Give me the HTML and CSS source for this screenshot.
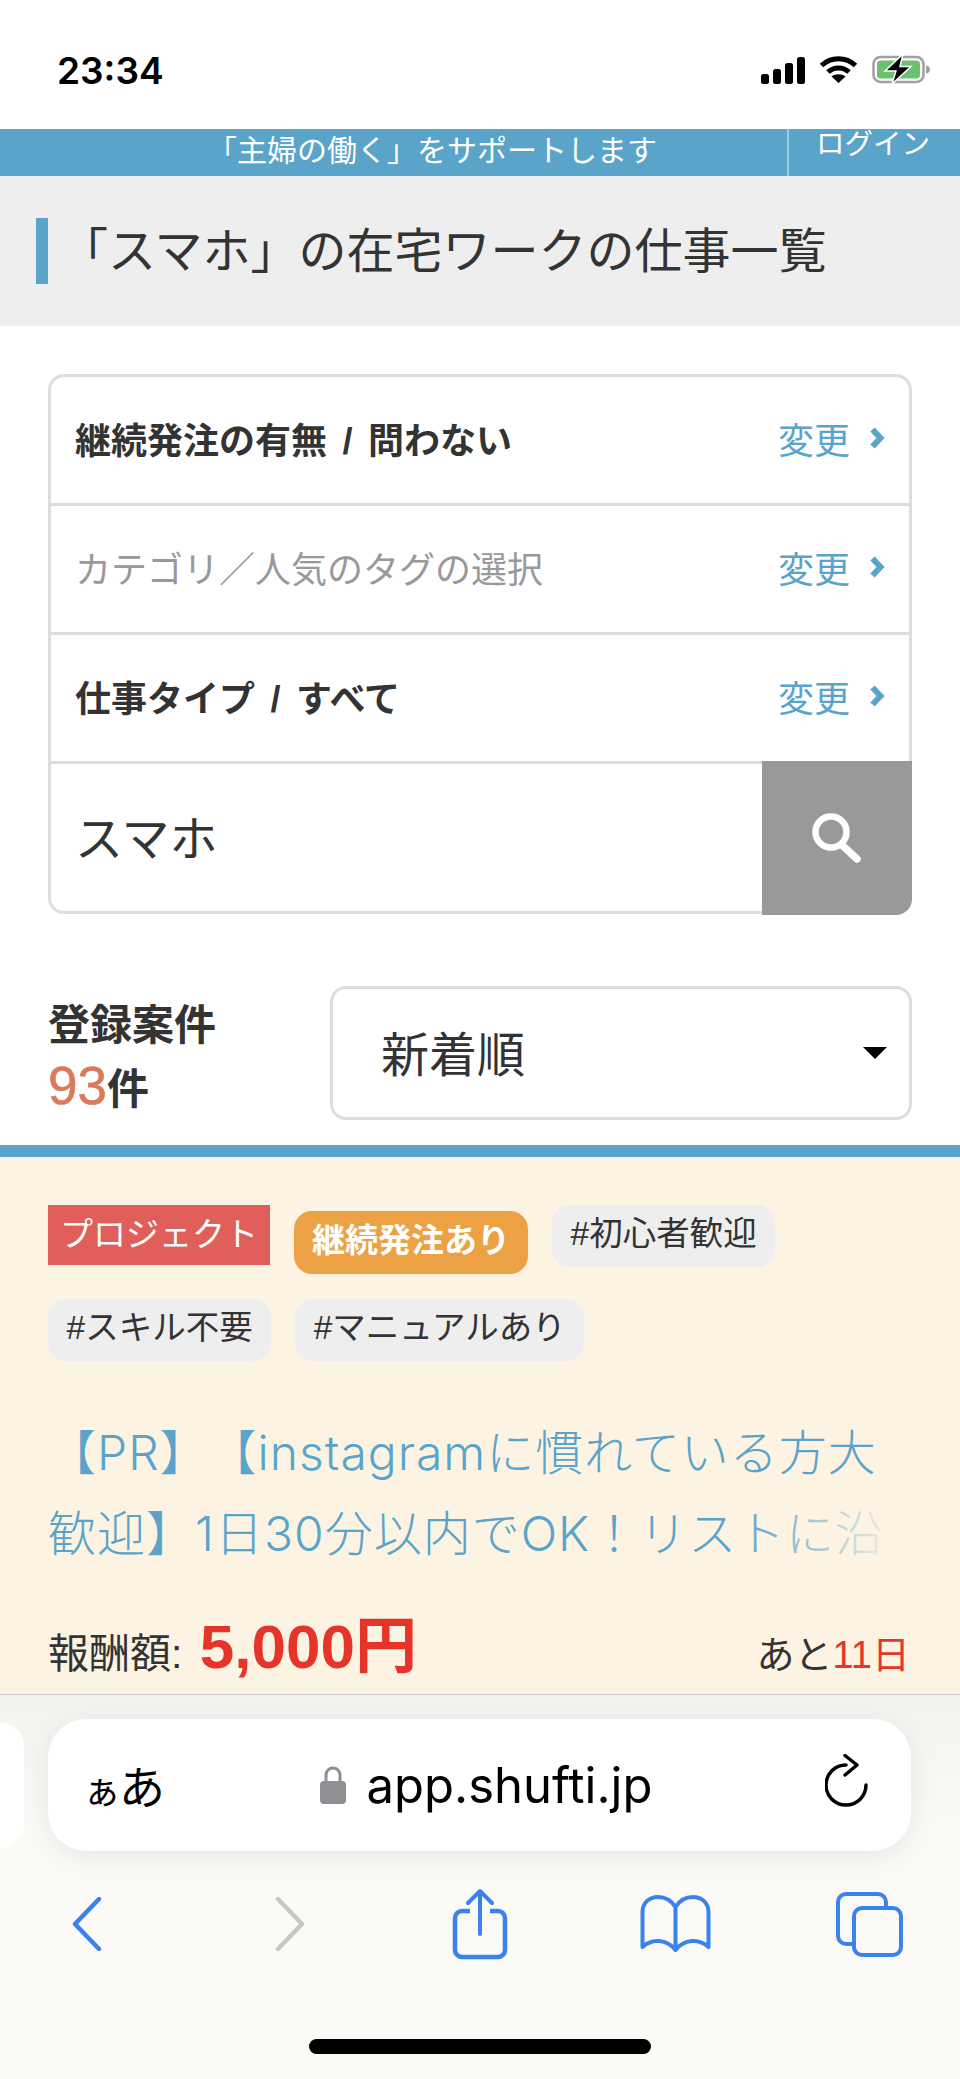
FILE: index.html
```html
<!DOCTYPE html>
<html lang="ja">
<head>
    <meta charset="UTF-8">
    <meta name="viewport" content="width=device-width, initial-scale=1.0">
    <title>「スマホ」の在宅ワークの仕事一覧</title>
    <link rel="stylesheet" href="styles.css">
</head>
<body>
    <div class="status-bar">
        <span class="time">23:34</span>
        <div class="status-icons">
            <svg class="icon-signal" width="44" height="27" viewBox="0 0 44 27">
                <rect x="0" y="17" width="8" height="10" rx="2.5"/>
                <rect x="12" y="12" width="8" height="15" rx="2.5"/>
                <rect x="24" y="6" width="8" height="21" rx="2.5"/>
                <rect x="36" y="0" width="8" height="27" rx="2.5"/>
            </svg>
            <svg class="icon-wifi" width="39" height="28" viewBox="0 0 39 28">
                <path d="M2.5 10.5C12 1.5 27 1.500 36.500 10.500" fill="none" stroke="#000" stroke-width="5"/>
                <path d="M9 17C15 11.500 24 11.500 30 17" fill="none" stroke="#000" stroke-width="5"/>
                <path d="M19.500 28L12.500 21.500C16.500 18.500 22.500 18.500 26.500 21.500Z"/>
            </svg>
            <svg class="icon-battery" width="59" height="30" viewBox="0 0 59 30">
                <rect x="1.500" y="3" width="50" height="25" rx="7" fill="none" stroke="#a0a0a0" stroke-width="2.500"/>
                <rect x="5" y="6.500" width="43" height="18" rx="3.500" fill="#6cc070"/>
                <path d="M54 11.500c3 .5 4 2 4 4s-1 3.500-4 4z" fill="#a0a0a0"/>
                <path d="M31 0L13 17H24L20 30L39 12.500H28Z" stroke="#fff" stroke-width="1.500"/>
            </svg>
        </div>
    </div>

    <header class="site-bar">
        <div class="site-bar-copy">「主婦の働く」をサポートします</div>
        <div class="site-bar-login">ログイン</div>
    </header>

    <div class="page-heading">
        <h1>「スマホ」の在宅ワークの仕事一覧</h1>
    </div>

    <div class="filter-box">
        <div class="filter-row">
            <span class="filter-label selected">継続発注の有無 / 問わない</span>
            <span class="filter-change">変更</span>
            <svg class="chevron" width="16" height="22" viewBox="0 0 16 22"><path d="M3.500 2.500L11.500 11L3.500 19.500" fill="none" stroke="#5aa4ca" stroke-width="6"/></svg>
        </div>
        <div class="filter-row">
            <span class="filter-label">カテゴリ／人気のタグの選択</span>
            <span class="filter-change">変更</span>
            <svg class="chevron" width="16" height="22" viewBox="0 0 16 22"><path d="M3.500 2.500L11.500 11L3.500 19.500" fill="none" stroke="#5aa4ca" stroke-width="6"/></svg>
        </div>
        <div class="filter-row">
            <span class="filter-label selected">仕事タイプ / すべて</span>
            <span class="filter-change">変更</span>
            <svg class="chevron" width="16" height="22" viewBox="0 0 16 22"><path d="M3.500 2.500L11.500 11L3.500 19.500" fill="none" stroke="#5aa4ca" stroke-width="6"/></svg>
        </div>
        <div class="search-row">
            <span class="search-text">スマホ</span>
            <div class="search-button">
                <svg width="50" height="50" viewBox="0 0 50 50">
                    <circle cx="19" cy="19" r="15.500" fill="none" stroke="#fff" stroke-width="6.500"/>
                    <path d="M31 33L45 46" stroke="#fff" stroke-width="7.500" stroke-linecap="round"/>
                </svg>
            </div>
        </div>
    </div>

    <div class="sort-row">
        <div class="count">
            <div>登録案件</div>
            <div><span class="count-num">93</span>件</div>
        </div>
        <div class="sort-select">
            <span class="sort-label">新着順</span>
            <span class="sort-arrow"></span>
        </div>
    </div>

    <div class="job-card">
        <div class="tags">
            <span class="tag tag-project">プロジェクト</span>
            <span class="tag tag-repeat">継続発注あり</span>
            <span class="tag tag-gray">#初心者歓迎</span>
            <span class="tag tag-gray">#スキル不要</span>
            <span class="tag tag-gray">#マニュアルあり</span>
        </div>
        <div class="job-title">【PR】【instagramに慣れている方大<br>歓迎】1日30分以内でOK！リストに沿<span class="job-title-fade"></span></div>
        <div class="job-meta">
            <div class="reward">報酬額: <span class="reward-num">5,000円</span></div>
            <div class="deadline">あと<span class="deadline-days">11日</span></div>
        </div>
    </div>

    <div class="browser-bar">
        <div class="address-wrap">
            <div class="prev-tab"></div>
            <div class="address">
                <span class="address-aa"><small>ぁ</small>あ</span>
                <div class="address-url">
                    <svg width="26" height="38" viewBox="0 0 26 38">
                        <path d="M6 18V9a7 7 0 0 1 14 0V18" fill="none" stroke="#8e8e93" stroke-width="3"/>
                        <rect x="0" y="15" width="26" height="23" rx="4" fill="#8e8e93"/>
                    </svg>
                    <span>app.shufti.jp</span>
                </div>
                <svg class="icon-reload" width="44" height="54" viewBox="0 0 44 54">
                    <path d="M21 11A20 20 0 1 0 41 31" fill="none" stroke="#000" stroke-width="3.500" stroke-linecap="round"/>
                    <path d="M20 1.500L32 11L20 21" fill="none" stroke="#000" stroke-width="3.500" stroke-linecap="round" stroke-linejoin="round"/>
                </svg>
            </div>
        </div>
        <div class="toolbar">
            <svg width="30" height="54" viewBox="0 0 30 54"><path d="M27 2L3 27L27 52" fill="none" stroke="#3b82ee" stroke-width="4.500" stroke-linecap="round" stroke-linejoin="round"/></svg>
            <svg width="30" height="54" viewBox="0 0 30 54"><path d="M3 2L27 27L3 52" fill="none" stroke="#c6c6c6" stroke-width="4.500" stroke-linecap="round" stroke-linejoin="round"/></svg>
            <svg class="tool-share" width="56" height="72" viewBox="0 0 56 72">
                <path d="M18 23H10a7 7 0 0 0-7 7V62a7 7 0 0 0 7 7H46a7 7 0 0 0 7-7V30a7 7 0 0 0-7-7H38" fill="none" stroke="#3b82ee" stroke-width="4.500"/>
                <path d="M28 46V3M16 15L28 3L40 15" fill="none" stroke="#3b82ee" stroke-width="4" stroke-linecap="round" stroke-linejoin="round"/>
            </svg>
            <svg class="tool-book" width="71" height="58" viewBox="0 0 71 58">
                <path d="M35.500 12C31 5 25 2 18 2C9 2 2.500 8 2.500 17V52C12 43 27 44 35.500 55C44 44 59 43 68.500 52V17C68.500 8 62 2 53 2C46 2 40 5 35.500 12V55" fill="none" stroke="#3b82ee" stroke-width="4" stroke-linejoin="round"/>
            </svg>
            <svg class="tool-tabs" width="67" height="65" viewBox="0 0 67 65">
                <path d="M50 14V10a8 8 0 0 0-8-8H10a8 8 0 0 0-8 8V44a8 8 0 0 0 8 8H17" fill="none" stroke="#3b82ee" stroke-width="4"/>
                <rect x="18" y="16" width="47" height="47" rx="8" fill="none" stroke="#3b82ee" stroke-width="4"/>
            </svg>
        </div>
        <div class="home-indicator"></div>
    </div>
</body>
</html>
```

FILE: styles.css
```css
* {
    box-sizing: border-box;
}
body {
    margin: 0;
    width: 960px;
    height: 2079px;
    overflow: hidden;
    display: flex;
    flex-direction: column;
    background-color: #ffffff;
    color: #333333;
    font-family: "Liberation Sans", "Noto Sans CJK JP", sans-serif;
}

/* status bar */
.status-bar {
    height: 129px;
    flex-shrink: 0;
    display: flex;
    justify-content: space-between;
    align-items: flex-start;
    padding: 55px 29px 0 57px;
}
.time {
    color: #000000;
    font-family: "Inter", "Liberation Sans", sans-serif;
    font-size: 37px;
    font-weight: 600;
    line-height: 31px;
}
.status-icons {
    display: flex;
    align-items: flex-start;
    gap: 14px;
}
.icon-signal {
    margin-top: 2px;
}
.icon-battery {
    margin-top: -1px;
}

/* site header */
.site-bar {
    height: 47px;
    flex-shrink: 0;
    display: flex;
    background-color: #5aa4ca;
    color: #ffffff;
    overflow: hidden;
}
.site-bar-copy {
    width: 787px;
    padding-left: 207px;
    font-size: 30px;
    line-height: 44px;
    white-space: nowrap;
}
.site-bar-login {
    flex: 1;
    border-left: 2px solid #9cc9e0;
    padding-left: 27px;
    font-size: 28.500px;
    line-height: 31px;
    white-space: nowrap;
}

.page-heading {
    height: 150px;
    flex-shrink: 0;
    display: flex;
    align-items: center;
    padding-left: 36px;
    background-color: #eeeeee;
}
h1 {
    margin: 0;
    height: 66px;
    border-left: 12px solid #5aa4ca;
    padding-left: 12px;
    font-size: 48px;
    font-weight: 400;
    line-height: 68px;
    white-space: nowrap;
}

/* filter list */
.filter-box {
    flex-shrink: 0;
    margin: 48px 48px 0;
    height: 540px;
    border: 3px solid #dddddd;
    border-radius: 16px;
}
.filter-row {
    height: 129px;
    display: flex;
    align-items: center;
    padding: 0 24px 5px 24px;
    border-bottom: 3px solid #dddddd;
}
.filter-label {
    flex: 1;
    color: #999999;
    font-size: 36px;
}
.filter-label.selected {
    color: #333333;
    font-weight: 700;
    word-spacing: 5.500px;
}
.filter-change {
    margin-right: 19px;
    color: #5aa4ca;
    font-size: 36px;
}
.search-row {
    height: 148px;
    display: flex;
    align-items: center;
}
.search-text {
    flex: 1;
    padding: 0 0 6px 24px;
    font-size: 48px;
}
.search-button {
    align-self: stretch;
    width: 150px;
    margin: -3px -3px -3px 0;
    display: flex;
    align-items: center;
    justify-content: center;
    background-color: #999999;
    border-bottom-right-radius: 16px;
}

/* count and sort */
.sort-row {
    flex-shrink: 0;
    height: 134px;
    margin-top: 72px;
    padding: 0 48px;
    display: flex;
    align-items: center;
}
.count {
    width: 282px;
    padding-top: 9px;
    font-size: 42px;
    font-weight: 700;
    line-height: 64px;
}
.count-num {
    color: #d97b5a;
    font-size: 53px;
    font-weight: 400;
    line-height: 1;
    -webkit-text-stroke: 0.6px #d97b5a;
}
.sort-select {
    flex: 1;
    height: 134px;
    display: flex;
    align-items: center;
    justify-content: space-between;
    padding: 0 22px 0 48px;
    border: 3px solid #dddddd;
    border-radius: 16px;
    font-size: 48px;
}
.sort-label {
    padding-bottom: 5px;
}
.sort-arrow {
    width: 0;
    height: 0;
    border-left: 12px solid transparent;
    border-right: 12px solid transparent;
    border-top: 12px solid #000000;
}

/* job card */
.job-card {
    flex-shrink: 0;
    height: 550px;
    margin-top: 25px;
    padding: 48px 50px 0 48px;
    border-top: 12px solid #5aa4ca;
    border-bottom: 1px solid #cccccc;
    background-color: #fdf3e3;
}
.tags {
    display: flex;
    flex-wrap: wrap;
    align-items: flex-start;
    column-gap: 24px;
    row-gap: 25px;
}
.tag {
    height: 62px;
    padding: 0 18px;
    font-size: 33px;
    line-height: 58px;
    white-space: nowrap;
}
.tag-project {
    height: 60px;
    padding: 0 12px;
    background-color: #e05f5a;
    color: #ffffff;
    line-height: 60px;
}
.tag-repeat {
    height: 63px;
    margin-top: 6px;
    border-radius: 18px;
    background-color: #eca244;
    color: #ffffff;
    font-weight: 700;
    line-height: 60px;
}
.tag-gray {
    padding: 0 18.500px;
    border-radius: 18px;
    background-color: #eeeeee;
    font-size: 33.500px;
}
.job-title {
    position: relative;
    width: 840px;
    margin-top: 51px;
    color: #5aa4ca;
    font-family: "Inter", "Noto Sans CJK JP", sans-serif;
    font-size: 48px;
    font-weight: 300;
    line-height: 81px;
    letter-spacing: 1px;
    text-spacing-trim: space-all;
    white-space: nowrap;
    overflow: hidden;
}
.job-title-fade {
    position: absolute;
    right: 0;
    bottom: 0;
    width: 150px;
    height: 81px;
    background: linear-gradient(to right, rgba(253, 243, 227, 0), rgba(253, 243, 227, 0.9));
}
.job-meta {
    margin-top: 33px;
    display: flex;
    justify-content: space-between;
    align-items: baseline;
}
.reward {
    font-size: 41px;
    line-height: 80px;
}
.reward-num {
    margin-left: 6px;
    color: #e5352b;
    font-size: 62px;
    font-weight: 700;
}
.deadline {
    font-size: 38px;
}
.deadline-days {
    color: #e5352b;
}

/* safari toolbar */
.browser-bar {
    flex: 1;
    padding-top: 24px;
    background: linear-gradient(to bottom, #f3f2ef, #fcfaf7 35%);
}
.address-wrap {
    display: flex;
    height: 132px;
    padding-right: 49px;
}
.prev-tab {
    width: 24px;
    height: 126px;
    margin: 3px 24px 0 0;
    border-radius: 0 30px 30px 0;
    background-color: #ffffff;
}
.address {
    flex: 1;
    display: flex;
    align-items: center;
    padding: 0 42px 0 35px;
    border-radius: 38px;
    background-color: #ffffff;
    box-shadow: 0 6px 30px rgba(0, 0, 0, 0.08);
    color: #000000;
}
.address-aa {
    width: 78px;
    padding-bottom: 2px;
    font-family: "Noto Sans CJK JP", sans-serif;
    font-size: 46px;
    letter-spacing: -2px;
    white-space: nowrap;
}
.address-aa small {
    font-size: 38px;
}
.address-url {
    flex: 1;
    display: flex;
    align-items: center;
    justify-content: center;
    gap: 21px;
    padding-right: 14px;
    font-family: "Inter", "Liberation Sans", sans-serif;
    font-size: 49px;
    white-space: nowrap;
}
.icon-reload {
    margin-top: -8px;
}
.toolbar {
    height: 72px;
    margin-top: 37px;
    padding-left: 72px;
    display: grid;
    grid-template-columns: 203px 177px 188px 196px auto;
    align-items: center;
}
.tool-share {
    margin-top: -1px;
}
.home-indicator {
    width: 342px;
    height: 15px;
    margin: 79px auto 0;
    border-radius: 8px;
    background-color: #000000;
}
```
